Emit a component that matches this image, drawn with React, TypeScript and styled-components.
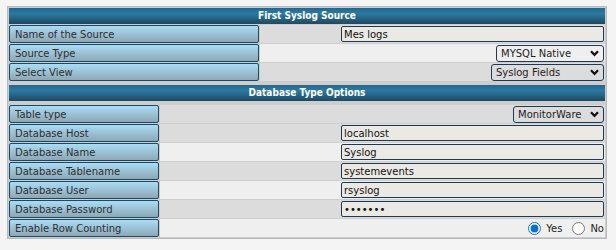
import styled, { createGlobalStyle } from 'styled-components';

const GlobalStyle = createGlobalStyle`
body {
    margin: 0;
    background-color: #f4f4f4;
    font-family: "DejaVu Sans", Verdana, sans-serif;
    font-size: 10px;
    color: #333;
}
`;

const PanelDiv = styled.div`
margin: 6px 0 0 7px;
width: 600px;
box-sizing: border-box;
border: 1px solid #b9b9b9;
padding: 1px;
background-color: #cdcdcd;
display: flex;
flex-direction: column;
gap: 4px;
`;

const SectionDiv = styled.div<{ labelWidth: number }>`
display: grid;
grid-template-columns: ${props => props.labelWidth}px 1fr;
gap: 1px;
`;

const HeaderDiv = styled.div<{ spaceBelow: number }>`
grid-column: 1 / -1;
height: 16px;
line-height: 16px;
margin-bottom: ${props => props.spaceBelow}px;
text-align: center;
font-family: "DejaVu Sans Condensed", "DejaVu Sans", sans-serif;
font-weight: bold;
color: #fff;
background: linear-gradient(#25678c, #2c7aa3 35%, #1f4860);
`;

const LabelDiv = styled.div`
box-sizing: border-box;
height: 18px;
padding-left: 5px;
display: flex;
align-items: center;
border: 1px solid #174a66;
border-radius: 2px;
background: linear-gradient(#a9dcf5, #8ea7b5);
color: #2e2e2e;
white-space: nowrap;
`;

const ValueDiv = styled.div<{ dark: boolean }>`
height: 18px;
padding-right: 1px;
display: flex;
align-items: center;
justify-content: flex-end;
background-color: ${props => props.dark ? '#dcdcdc' : '#efefef'};
`;

const TextInput = styled.input`
box-sizing: border-box;
width: 263px;
height: 16px;
padding: 0 2px;
border: 1px solid #1d3a52;
border-radius: 2px;
background-color: #ebe9e3;
font-family: "DejaVu Sans", Verdana, sans-serif;
font-size: 10px;
color: #111;
outline: none;
`;

const SelectWrap = styled.div`
position: relative;
display: flex;
`;

const Select = styled.select<{ w: number }>`
appearance: none;
box-sizing: border-box;
width: ${props => props.w}px;
height: 17px;
padding: 0 0 0 4px;
border: 1px solid #1d3a52;
border-radius: 3px;
background-color: transparent;
font-family: "DejaVu Sans", Verdana, sans-serif;
font-size: 10px;
color: #222;
outline: none;
`;

const ChevronSvg = styled.svg`
position: absolute;
right: 5px;
top: 5px;
pointer-events: none;
`;

const RadioGroup = styled.div`
display: flex;
align-items: center;
`;

const RadioLabel = styled.label`
display: flex;
align-items: center;
color: #222;
`;

const Radio = styled.input`
width: 13px;
height: 13px;
margin: 0 5px 0 10px;
accent-color: #0b6fd8;
`;

function Field({ label, dark, children }: { label: string, dark: boolean, children?: React.ReactNode }) {
    return (
        <>
            <LabelDiv>{label}</LabelDiv>
            <ValueDiv dark={dark}>{children}</ValueDiv>
        </>
    );
}

function Dropdown({ value, options, width }: { value: string, options: string[], width: number }) {
    return (
        <SelectWrap>
            <Select w={width} defaultValue={value}>
                {options.map(o => <option key={o}>{o}</option>)}
            </Select>
            <ChevronSvg width="9" height="7" viewBox="0 0 9 7">
                <polyline points="1,1.2 4.5,4.8 8,1.2" fill="none" stroke="#111" strokeWidth="2.2"/>
            </ChevronSvg>
        </SelectWrap>
    );
}

export default function App(): JSX.Element {
    return (
        <>
            <GlobalStyle/>
            <PanelDiv>
                <SectionDiv labelWidth={250}>
                    <HeaderDiv spaceBelow={0}>First Syslog Source</HeaderDiv>
                    <Field label="Name of the Source" dark={true}>
                        <TextInput defaultValue="Mes logs"/>
                    </Field>
                    <Field label="Source Type" dark={false}>
                        <Dropdown value="MYSQL Native" options={['Disk File', 'MYSQL Native', 'Database (PDO)']} width={108}/>
                    </Field>
                    <Field label="Select View" dark={true}>
                        <Dropdown value="Syslog Fields" options={['Syslog Fields', 'EventLog Fields']} width={113}/>
                    </Field>
                </SectionDiv>
                <SectionDiv labelWidth={150}>
                    <HeaderDiv spaceBelow={3}>Database Type Options</HeaderDiv>
                    <Field label="Table type" dark={true}>
                        <Dropdown value="MonitorWare" options={['MonitorWare', 'Syslog NG']} width={91}/>
                    </Field>
                    <Field label="Database Host" dark={true}>
                        <TextInput defaultValue="localhost"/>
                    </Field>
                    <Field label="Database Name" dark={false}>
                        <TextInput defaultValue="Syslog"/>
                    </Field>
                    <Field label="Database Tablename" dark={true}>
                        <TextInput defaultValue="systemevents"/>
                    </Field>
                    <Field label="Database User" dark={false}>
                        <TextInput defaultValue="rsyslog"/>
                    </Field>
                    <Field label="Database Password" dark={true}>
                        <TextInput type="password" defaultValue="rsyslog"/>
                    </Field>
                    <Field label="Enable Row Counting" dark={false}>
                        <RadioGroup>
                            <RadioLabel><Radio type="radio" name="rowcount" defaultChecked/>Yes</RadioLabel>
                            <RadioLabel><Radio type="radio" name="rowcount"/>No</RadioLabel>
                        </RadioGroup>
                    </Field>
                </SectionDiv>
            </PanelDiv>
        </>
    );
}
